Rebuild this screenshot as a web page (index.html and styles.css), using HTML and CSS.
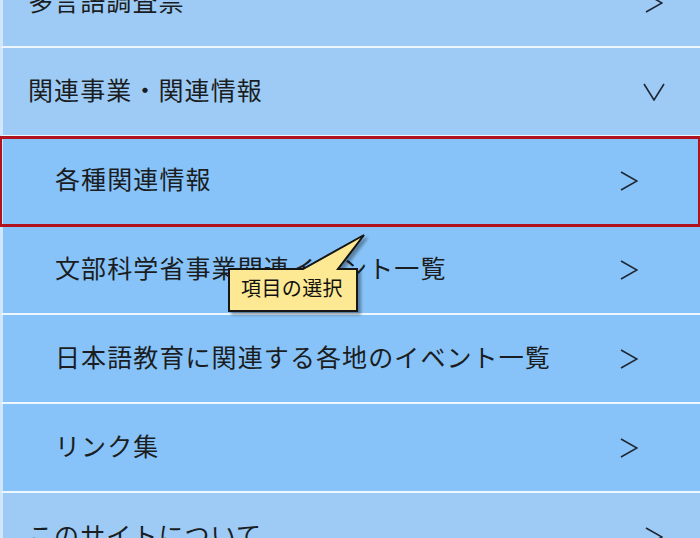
FILE: index.html
```html
<!DOCTYPE html>
<html lang="ja">
<head>
<meta charset="utf-8">
<link rel="stylesheet" href="styles.css">
</head>
<body>
<div class="menu">
  <div class="row top">
    <span class="label">多言語調査票</span>
    <svg class="chev" width="18" height="20" viewBox="0 0 18 20"><polyline points="1,1 17,10 1,19"/></svg>
  </div>
  <div class="row top">
    <span class="label">関連事業・関連情報</span>
    <svg class="chev down" width="22" height="18" viewBox="0 0 22 18"><polyline points="1,1 11,17 21,1"/></svg>
  </div>
  <div class="row sub selected">
    <span class="label">各種関連情報</span>
    <svg class="chev" width="18" height="20" viewBox="0 0 18 20"><polyline points="1,1 17,10 1,19"/></svg>
  </div>
  <div class="row sub">
    <span class="label">文部科学省事業関連イベント一覧</span>
    <svg class="chev" width="18" height="20" viewBox="0 0 18 20"><polyline points="1,1 17,10 1,19"/></svg>
  </div>
  <div class="row sub">
    <span class="label">日本語教育に関連する各地のイベント一覧</span>
    <svg class="chev" width="18" height="20" viewBox="0 0 18 20"><polyline points="1,1 17,10 1,19"/></svg>
  </div>
  <div class="row sub">
    <span class="label">リンク集</span>
    <svg class="chev" width="18" height="20" viewBox="0 0 18 20"><polyline points="1,1 17,10 1,19"/></svg>
  </div>
  <div class="row top">
    <span class="label">このサイトについて</span>
    <svg class="chev" width="18" height="20" viewBox="0 0 18 20"><polyline points="1,1 17,10 1,19"/></svg>
  </div>
</div>
<div class="callout">
  <svg class="callout-shape" width="170" height="100" viewBox="0 0 170 100">
    <defs>
      <filter id="sh" x="-10%" y="-10%" width="130%" height="140%">
        <feDropShadow dx="3" dy="3" stdDeviation="1.5" flood-color="#000" flood-opacity="0.35"/>
      </filter>
    </defs>
    <path d="M9 39 H83 L144 5 L118 39 H137 V81 H9 Z" filter="url(#sh)"/>
  </svg>
  <span class="callout-text">項目の選択</span>
</div>
</body>
</html>
```

FILE: styles.css
```css
html, body {
  margin: 0;
  padding: 0;
}
body {
  width: 700px;
  height: 538px;
  overflow: hidden;
  position: relative;
  background: #9ecbf5;
  font-family: "Noto Sans CJK JP", "Noto Sans", sans-serif;
}
.menu {
  margin-top: -41px;
  display: flex;
  flex-direction: column;
}
.row {
  height: 87px;
  display: flex;
  align-items: center;
  justify-content: space-between;
  border-left: 3px solid #cfe6fb;
  border-bottom: 2px solid #eef6fe;
  color: #1a1d22;
  font-size: 25px;
  line-height: 1;
  flex-shrink: 0;
}
.row.top {
  background: #9ecbf5;
  padding: 0 37px 0 25px;
}
.row.sub {
  background: #87c3f9;
  padding: 0 62px 0 52px;
}
.row.selected {
  outline: 3px solid #b0121e;
  outline-offset: -2px;
  position: relative;
  z-index: 1;
}
.label {
  letter-spacing: 1.1px;
  margin-bottom: 5px;
}
.chev {
  fill: none;
  stroke: #1e2733;
  stroke-width: 1.6;
  stroke-linejoin: miter;
}
.chev.down {
  margin-right: -2px;
}
.callout {
  position: absolute;
  left: 220px;
  top: 230px;
  width: 170px;
  height: 100px;
  z-index: 2;
}
.callout-shape {
  display: block;
}
.callout-shape path {
  fill: #fde993;
  stroke: #121212;
  stroke-width: 2;
  stroke-linejoin: miter;
}
.callout-text {
  position: absolute;
  left: 21px;
  top: 46px;
  font-size: 20px;
  line-height: 24px;
  color: #111;
  letter-spacing: 0.4px;
}
```
